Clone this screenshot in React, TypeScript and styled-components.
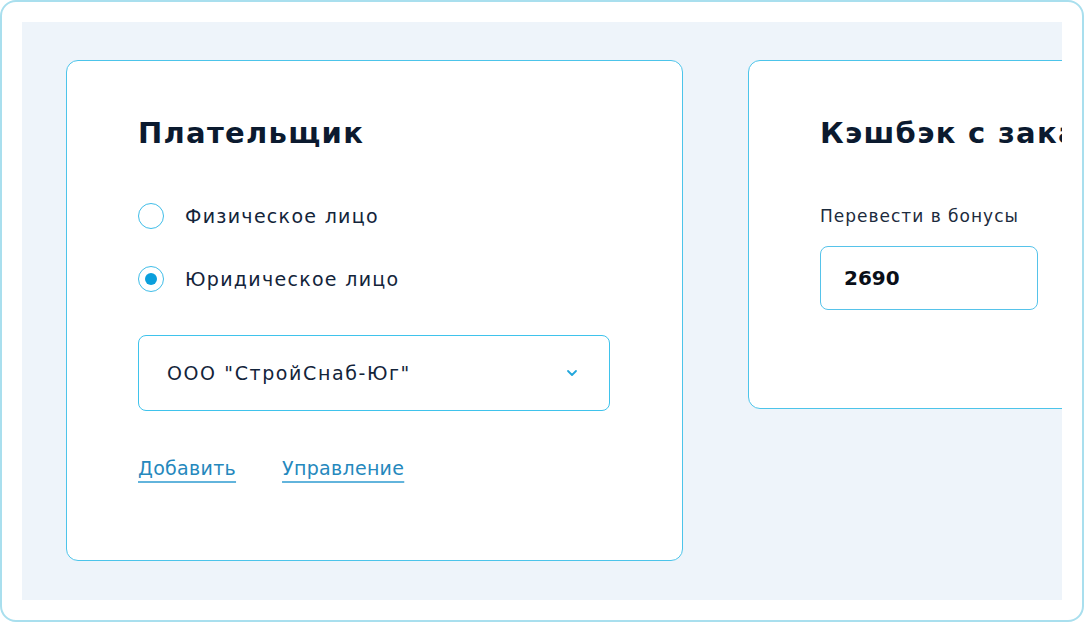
import { useState } from "react";
import styled, { createGlobalStyle } from "styled-components";

const GlobalStyle = createGlobalStyle`
  html, body {
    margin: 0;
    padding: 0;
    background: #ffffff;
  }
  * {
    box-sizing: border-box;
  }
  body {
    font-family: "DejaVu Sans", "Noto Sans", sans-serif;
    color: #0d1b2e;
  }
`;

export default function App() {
  const [payer, setPayer] = useState("legal");

  return (
    <>
      <GlobalStyle />
      <Frame>
        <Canvas>
          <Card $width={617} $height={501}>
            <Title>Плательщик</Title>
            <RadioList>
              <RadioRow onClick={() => setPayer("person")}>
                <RadioCircle $checked={payer === "person"} />
                <RadioLabel>Физическое лицо</RadioLabel>
              </RadioRow>
              <RadioRow onClick={() => setPayer("legal")}>
                <RadioCircle $checked={payer === "legal"} />
                <RadioLabel>Юридическое лицо</RadioLabel>
              </RadioRow>
            </RadioList>
            <Select>
              <SelectValue>ООО "СтройСнаб-Юг"</SelectValue>
              <svg width="12" height="8" viewBox="0 0 12 8" fill="none">
                <path
                  d="M2 2l4 4 4-4"
                  stroke="#22a7dc"
                  strokeWidth="1.8"
                  strokeLinecap="round"
                  strokeLinejoin="round"
                />
              </svg>
            </Select>
            <Links>
              <LinkText>Добавить</LinkText>
              <LinkText>Управление</LinkText>
            </Links>
          </Card>
          <Card $width={360} $height={349}>
            <Title>Кэшбэк с заказа</Title>
            <FieldLabel>Перевести в бонусы</FieldLabel>
            <AmountInput>2690</AmountInput>
          </Card>
        </Canvas>
      </Frame>
    </>
  );
}

const Frame = styled.div`
  width: 1084px;
  height: 622px;
  border: 2px solid #a9dfee;
  border-radius: 16px;
  background: #ffffff;
  padding: 20px;
`;

// the second card runs past the right edge and is cut, as in the layout
const Canvas = styled.div`
  width: 1040px;
  height: 578px;
  background: #eef4fa;
  display: flex;
  align-items: flex-start;
  gap: 65px;
  padding: 38px 0 0 44px;
  overflow: hidden;
`;

const Card = styled.div<{ $width: number; $height: number }>`
  flex: none;
  width: ${(p) => p.$width}px;
  height: ${(p) => p.$height}px;
  background: #ffffff;
  border: 1px solid #4cc4ea;
  border-radius: 12px;
  padding: 50px 71px 0;
  display: flex;
  flex-direction: column;
  white-space: nowrap;
`;

const Title = styled.h2`
  margin: 0;
  font-size: 29px;
  line-height: 44px;
  font-weight: 800;
  letter-spacing: 1.3px;
  color: #0b1a2f;
`;

const RadioList = styled.div`
  display: flex;
  flex-direction: column;
  gap: 37px;
  margin-top: 48px;
`;

const RadioRow = styled.label`
  display: flex;
  align-items: center;
  gap: 21px;
  cursor: pointer;
`;

const RadioCircle = styled.span<{ $checked: boolean }>`
  flex: none;
  width: 26px;
  height: 26px;
  border-radius: 50%;
  border: 1.5px solid #3fbde8;
  display: flex;
  align-items: center;
  justify-content: center;

  &::after {
    content: "";
    width: 12px;
    height: 12px;
    border-radius: 50%;
    background: #0a9fdc;
    display: ${(p) => (p.$checked ? "block" : "none")};
  }
`;

const RadioLabel = styled.span`
  font-size: 19px;
  line-height: 26px;
  letter-spacing: 1.3px;
  color: #13243a;
`;

const Select = styled.div`
  margin-top: 43px;
  width: 472px;
  height: 76px;
  border: 1px solid #3fc3ec;
  border-radius: 8px;
  display: flex;
  align-items: center;
  justify-content: space-between;
  padding: 0 31px 0 28px;
  cursor: pointer;
`;

const SelectValue = styled.span`
  font-size: 19px;
  letter-spacing: 1.6px;
  color: #13243a;
`;

const Links = styled.div`
  display: flex;
  gap: 46px;
  margin-top: 44px;
`;

const LinkText = styled.a`
  font-size: 19px;
  line-height: 26px;
  letter-spacing: 0.3px;
  color: #2588bd;
  text-decoration: underline;
  text-decoration-color: #62b4dc;
  text-decoration-thickness: 2px;
  text-underline-offset: 6px;
  cursor: pointer;
`;

const FieldLabel = styled.div`
  margin-top: 49px;
  font-size: 17px;
  line-height: 24px;
  letter-spacing: 1px;
  color: #1c2b3d;
`;

const AmountInput = styled.div`
  margin-top: 18px;
  width: 218px;
  height: 64px;
  border: 1px solid #56c3ea;
  border-radius: 8px;
  display: flex;
  align-items: center;
  padding: 0 23px;
  font-size: 20px;
  font-weight: 700;
  color: #0a0f18;
`;
